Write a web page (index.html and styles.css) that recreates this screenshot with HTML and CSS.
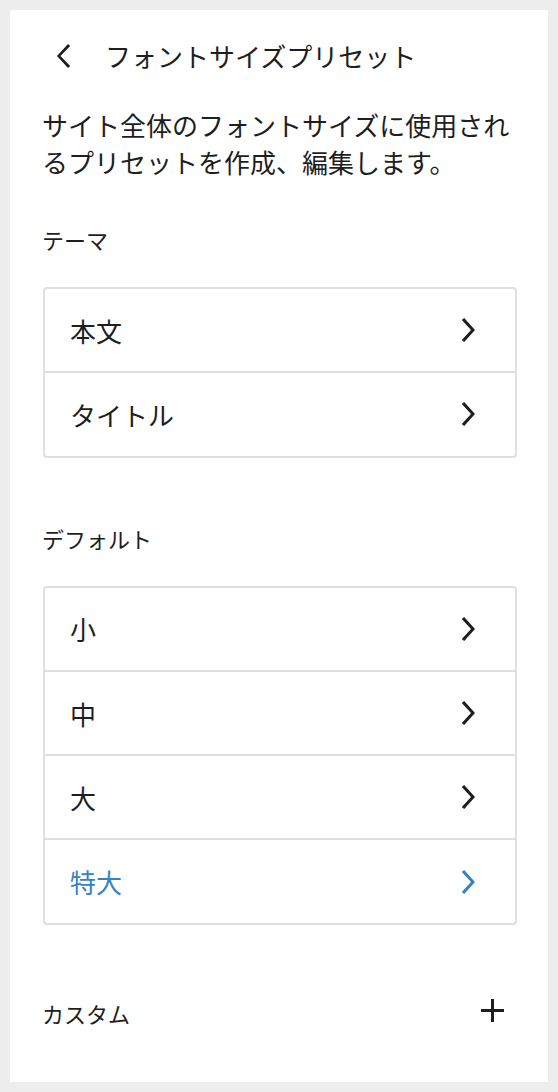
FILE: index.html
```html
<!DOCTYPE html>
<html lang="ja">

<head>
    <meta charset="UTF-8">
    <title>フォントサイズプリセット</title>
    <link rel="stylesheet" href="styles.css">
</head>

<body>
    <div class="panel">
        <div class="panel-header">
            <button class="icon-button back-button" type="button" aria-label="戻る">
                <svg viewBox="0 0 24 24" width="48" height="48"><path d="M14.6 7l-1.1-1L8 12l5.5 6 1.1-1L9.7 12l4.9-5z"></path></svg>
            </button>
            <h2 class="panel-title">フォントサイズプリセット</h2>
        </div>

        <p class="description">サイト全体のフォントサイズに使用されるプリセットを作成、編集します。</p>

        <h3 class="section-label">テーマ</h3>
        <div class="item-group">
            <div class="item">
                <span>本文</span>
                <svg class="chevron" viewBox="0 0 24 24" width="48" height="48"><path d="M10.6 6L9.4 7l4.6 5-4.6 5 1.2 1 5.4-6z"></path></svg>
            </div>
            <div class="item">
                <span>タイトル</span>
                <svg class="chevron" viewBox="0 0 24 24" width="48" height="48"><path d="M10.6 6L9.4 7l4.6 5-4.6 5 1.2 1 5.4-6z"></path></svg>
            </div>
        </div>

        <h3 class="section-label">デフォルト</h3>
        <div class="item-group">
            <div class="item">
                <span>小</span>
                <svg class="chevron" viewBox="0 0 24 24" width="48" height="48"><path d="M10.6 6L9.4 7l4.6 5-4.6 5 1.2 1 5.4-6z"></path></svg>
            </div>
            <div class="item">
                <span>中</span>
                <svg class="chevron" viewBox="0 0 24 24" width="48" height="48"><path d="M10.6 6L9.4 7l4.6 5-4.6 5 1.2 1 5.4-6z"></path></svg>
            </div>
            <div class="item">
                <span>大</span>
                <svg class="chevron" viewBox="0 0 24 24" width="48" height="48"><path d="M10.6 6L9.4 7l4.6 5-4.6 5 1.2 1 5.4-6z"></path></svg>
            </div>
            <div class="item active">
                <span>特大</span>
                <svg class="chevron" viewBox="0 0 24 24" width="48" height="48"><path d="M10.6 6L9.4 7l4.6 5-4.6 5 1.2 1 5.4-6z"></path></svg>
            </div>
        </div>

        <div class="custom-row">
            <h3 class="section-label custom-label">カスタム</h3>
            <button class="icon-button" type="button" aria-label="追加">
                <svg viewBox="0 0 24 24" width="48" height="48"><path d="M11 12.5V17.5H12.5V12.5H17.5V11H12.5V6H11V11H6V12.5H11Z"></path></svg>
            </button>
        </div>
    </div>
</body>

</html>
```

FILE: styles.css
```css
body {
    font-family: "Noto Sans CJK JP", "Noto Sans", sans-serif;
    margin: 0;
    padding: 10px;
    background-color: #ededed;
    color: #1e1e1e;
}

.panel {
    box-sizing: border-box;
    height: 1072px;
    padding: 22px 31px 0 33px;
    background-color: #fff;
}

.panel-header {
    display: flex;
    align-items: center;
    gap: 16px;
}

.icon-button {
    width: 48px;
    height: 48px;
    padding: 0;
    border: none;
    background: none;
    cursor: pointer;
}

.icon-button svg {
    display: block;
    fill: #1e1e1e;
}

.back-button {
    margin-left: -2px;
}

.panel-title {
    margin: 0;
    font-size: 26px;
    font-weight: normal;
    line-height: 48px;
}

.description {
    margin: 26px 0 0 -1px;
    font-size: 26px;
    line-height: 37px;
}

.section-label {
    margin: 43px 0 0 -1px;
    font-size: 22px;
    font-weight: normal;
    line-height: 32px;
}

.item-group {
    margin-top: 32px;
    border: 2px solid #e0e0e0;
    border-radius: 4px;
}

.item {
    display: flex;
    align-items: center;
    justify-content: space-between;
    height: 82.3px;
    padding: 0 24px 0 25px;
    font-size: 26px;
}

.item + .item {
    border-top: 2px solid #e0e0e0;
}

.chevron {
    fill: #1e1e1e;
}

.item.active {
    color: #3582c4;
}

.item.active .chevron {
    fill: #3582c4;
}

.item-group + .section-label {
    margin-top: 64px;
}

.custom-row {
    display: flex;
    align-items: center;
    justify-content: space-between;
    margin-top: 62px;
}

.custom-label {
    margin: 5px 0 0 -1px;
}
```
